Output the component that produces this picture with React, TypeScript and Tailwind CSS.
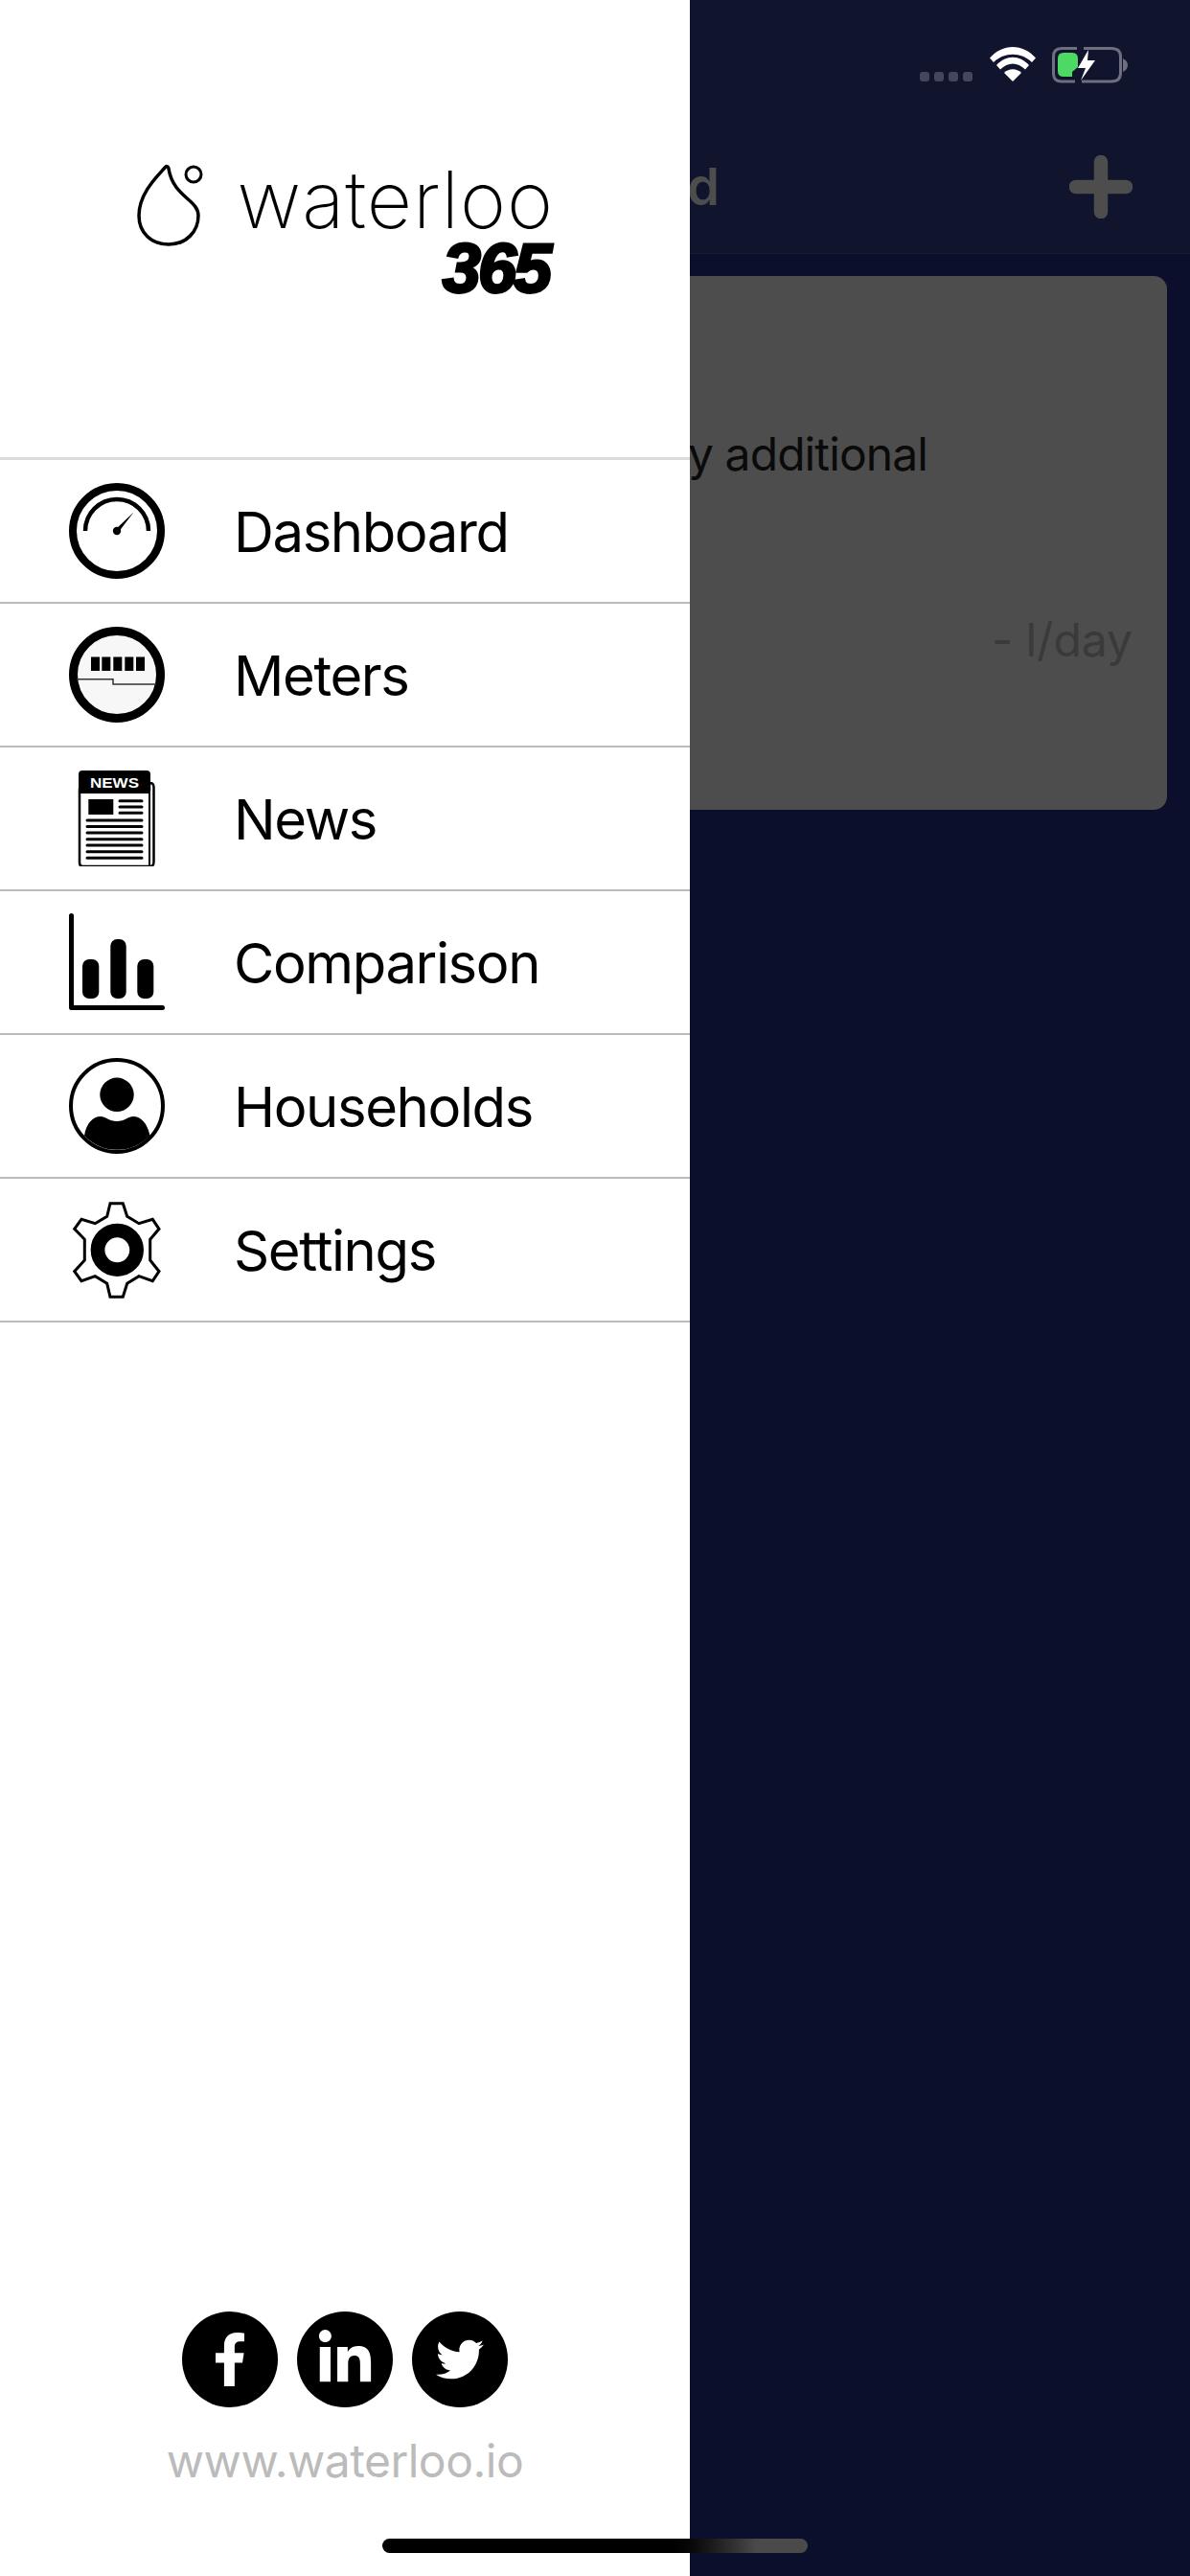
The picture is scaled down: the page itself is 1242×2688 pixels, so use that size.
import React from 'react';
import { FaFacebookF, FaLinkedinIn, FaTwitter } from 'react-icons/fa';

const font = { fontFamily: 'Inter, "Liberation Sans", sans-serif' };

const GaugeIcon = () => (
  <svg viewBox="0 0 100 100" className="w-[100px] h-[100px]">
    <circle cx="50" cy="50" r="46" fill="none" stroke="#000" strokeWidth="8" />
    <path d="M17 50A33 33 0 0 1 83 50" fill="none" stroke="#000" strokeWidth="4.5" />
    <circle cx="50" cy="50" r="4.2" fill="#000" />
    <path d="M48.5 48.5L67.5 30.5L51.5 51.5Z" fill="#000" />
  </svg>
);

const MeterIcon = () => (
  <svg viewBox="0 0 100 100" className="w-[100px] h-[100px]">
    <circle cx="50" cy="50" r="45.5" fill="#f7f7f7" stroke="#000" strokeWidth="9" />
    <rect x="23" y="31.5" width="9" height="14.5" fill="#000" />
    <rect x="34.3" y="31.5" width="9" height="14.5" fill="#000" />
    <rect x="46.3" y="31.5" width="9" height="14.5" fill="#000" />
    <rect x="58.3" y="31.5" width="9" height="14.5" fill="#000" />
    <rect x="70" y="31.5" width="9" height="14.5" fill="#000" />
    <path d="M8 54.7H46V60H91" fill="none" stroke="#333" strokeWidth="1.5" />
  </svg>
);

const NewsIcon = () => (
  <svg viewBox="0 0 100 100" className="w-[100px] h-[100px]">
    <path d="M84 13H85Q88.5 13 88.5 18V95Q88.5 100 85 100H14Q11 100 11 96V20H84Z" fill="#fff" stroke="#000" strokeWidth="2.5" />
    <path d="M84 22V100" stroke="#000" strokeWidth="2" />
    <path d="M10 24V4Q10 0 14 0H81Q85 0 85 4V24Z" fill="#000" />
    <text x="47.5" y="17.5" textAnchor="middle" fontSize="14" fontWeight="700" fill="#fff" textLength="51" lengthAdjust="spacingAndGlyphs" fontFamily="Liberation Sans, sans-serif">NEWS</text>
    <rect x="20.3" y="30" width="26" height="16" fill="#000" />
    <path d="M53 31.7H76M53 38H76M53 44.3H76" stroke="#000" strokeWidth="3" strokeLinecap="round" />
    <path d="M19 52H76M19 58.4H76M19 65H76M19 71.7H76M19 78H76M19 84.7H76M19 91.3H76" stroke="#000" strokeWidth="3" strokeLinecap="round" />
  </svg>
);

const ChartIcon = () => (
  <svg viewBox="0 0 100 102" className="w-[100px] h-[102px]">
    <path d="M2.5 2.5V98.5H97.5" fill="none" stroke="#000" strokeWidth="5" strokeLinecap="round" strokeLinejoin="round" />
    <rect x="14" y="48" width="17.3" height="41" rx="7" fill="#000" />
    <rect x="43.3" y="27" width="16.4" height="62" rx="7" fill="#000" />
    <rect x="71.3" y="48" width="17" height="41" rx="7" fill="#000" />
  </svg>
);

const PersonIcon = () => (
  <svg viewBox="0 0 100 100" className="w-[100px] h-[100px]">
    <circle cx="50" cy="50" r="48" fill="none" stroke="#000" strokeWidth="4" />
    <circle cx="50" cy="38.3" r="17.7" fill="#000" />
    <path d="M16 81C18 68 25 61 33 61C38 61 42 66 50 66C58 66 62 61 67 61C75 61 82 68 84.5 81A47 47 0 0 1 16 81Z" fill="#000" />
  </svg>
);

const GearIcon = () => (
  <svg viewBox="0 0 100 101" className="w-[100px] h-[101px]">
    <polygon
      points="43,1.7 56.3,1.7 60.7,15.3 73,22.7 87.3,18.3 94,28.3 84.7,39.3 84.7,61 94,72.7 87.3,82.7 73,77.7 60.7,85.3 56.3,99.3 43,99.3 39.7,85.3 27.3,77.7 13,82.7 5.7,72.7 16.3,61 16.3,39.3 5.7,28.3 13,18.3 27.3,22.7 39.7,15.3"
      fill="none"
      stroke="#000"
      strokeWidth="3"
    />
    <circle cx="50.3" cy="50.3" r="20.3" fill="none" stroke="#000" strokeWidth="14.7" />
  </svg>
);

const menuItems = [
  { label: 'Dashboard', icon: <GaugeIcon /> },
  { label: 'Meters', icon: <MeterIcon /> },
  { label: 'News', icon: <NewsIcon /> },
  { label: 'Comparison', icon: <ChartIcon /> },
  { label: 'Households', icon: <PersonIcon /> },
  { label: 'Settings', icon: <GearIcon /> },
];

const StatusIcons = () => (
  <svg viewBox="0 0 230 50" className="w-[230px] h-[50px]">
    {/* cell dots */}
    <rect x="13" y="28" width="10" height="10" rx="3" fill="#44475c" />
    <rect x="28" y="28" width="10" height="10" rx="3" fill="#44475c" />
    <rect x="43" y="28" width="10" height="10" rx="3" fill="#44475c" />
    <rect x="58" y="28" width="10" height="10" rx="3" fill="#44475c" />
    {/* wifi */}
    <path d="M86 13.5C99 -2 121 -2 134 13.5L130 18C119 7 101 7 90 18Z" fill="#fff" />
    <path d="M93 21C103 10 117 10 127 21L123 25.5C115 17.5 105 17.5 97 25.5Z" fill="#fff" />
    <path d="M101 29C106 24 114 24 119 29L110 38Z" fill="#fff" />
    {/* battery */}
    <path d="M177 3.5H161Q152.5 3.5 152.5 12V30Q152.5 38 161 38H175M182 38H213Q222.5 38 222.5 29V12Q222.5 3.5 213 3.5H184" fill="none" stroke="#6d6e7e" strokeWidth="3" />
    <path d="M225 14Q230 16.5 230 21Q230 25.5 225 28Z" fill="#6d6e7e" />
    <path d="M163 8H172Q178 8 178 14V23L172 28V33H163Q157 33 157 27V14Q157 8 163 8Z" fill="#4cd964" />
    <path d="M189 5L178 24H186L181 37L196 16H188Z" fill="#fff" />
  </svg>
);

const App: React.FC = () => {
  return (
    <div className="relative flex w-[1242px] h-[2688px] overflow-hidden bg-[#0b0f2c]" style={font}>
      {/* drawer */}
      <div className="relative z-10 flex flex-col w-[720px] shrink-0 bg-white">
        <div className="flex h-[480px] pl-[140px] pt-[170px] border-b-[3px] border-[#dcdcdc]">
          <svg viewBox="0 0 75 90" className="w-[75px] h-[90px]">
            <path d="M32 5C24 14 5 32 5 55C5 73 18 85 36 85C54 85 67 72 67 55C67 38 41 36 36 6C35.5 3 33.5 3 32 5Z" fill="none" stroke="#000" strokeWidth="3.5" />
            <circle cx="62" cy="12" r="8" fill="none" stroke="#000" strokeWidth="3" />
          </svg>
          <div className="flex flex-col items-end ml-[33px] w-[330px]">
            <span className="text-[82px] leading-[78px] font-extralight text-black tracking-[1px] whitespace-nowrap">waterloo</span>
            <span className="mr-[5px] text-[72px] leading-[64px] font-bold italic font-['Liberation_Sans'] text-black tracking-[-3px] [-webkit-text-stroke:3px_black]">365</span>
          </div>
        </div>
        {menuItems.map(item => (
          <div key={item.label} className="flex items-center h-[150px] border-b-2 border-[#bcbcbc]">
            <div className="flex justify-center w-[100px] ml-[72px]">{item.icon}</div>
            <span className="ml-[72px] pt-[2px] text-[58px] leading-none text-black tracking-[-1.4px]">{item.label}</span>
          </div>
        ))}
        <div className="mt-auto flex flex-col items-center pb-[90px]">
          <div className="flex gap-5">
            <div className="flex items-center justify-center w-[100px] h-[100px] rounded-full bg-black">
              <FaFacebookF className="text-white w-[56px] h-[56px]" />
            </div>
            <div className="flex items-center justify-center w-[100px] h-[100px] rounded-full bg-black">
              <FaLinkedinIn className="text-white w-[62px] h-[62px]" />
            </div>
            <div className="flex items-center justify-center w-[100px] h-[100px] rounded-full bg-black">
              <FaTwitter className="text-white w-[50px] h-[50px]" />
            </div>
          </div>
          <span className="mt-[26px] text-[48px] leading-[60px] text-[#bbbbbb] tracking-[-0.5px]">www.waterloo.io</span>
        </div>
      </div>

      {/* page behind the drawer */}
      <div className="flex flex-col flex-1 min-w-0">
        <div className="flex flex-col h-[265px] bg-[#10142d] border-b border-[#171b33]">
          <div className="flex justify-end pr-[65px] pt-[47px]">
            <StatusIcons />
          </div>
          <div className="flex items-center justify-between mt-[65px] pr-[60px]">
            <div className="flex justify-end w-[31px] overflow-hidden">
              <span className="text-[54px] leading-[60px] font-semibold text-[#4d4d4d] whitespace-nowrap">Dashboard</span>
            </div>
            <svg viewBox="0 0 66 66" className="w-[66px] h-[66px]">
              <path d="M33 7V59M7 33H59" stroke="#4d4d4d" strokeWidth="14.5" strokeLinecap="round" />
            </svg>
          </div>
        </div>
        <div className="flex flex-col h-[557px] mt-[23px] mr-[24px] bg-[#4d4d4d] rounded-r-[14px] pt-[156px]">
          <div className="flex justify-end w-[248px] overflow-hidden">
            <span className="text-[48px] leading-[60px] text-[#0a0a0a] tracking-[-0.9px] whitespace-nowrap">Any additional</span>
          </div>
          <div className="flex justify-end mt-[134px] pr-[36px]">
            <span className="text-[48px] leading-[60px] text-[#3a3a3a]">- l/day</span>
          </div>
        </div>
      </div>

      {/* home indicator */}
      <div className="absolute z-20 left-[399px] top-[2649px] w-[444px] h-[15px] rounded-full bg-gradient-to-r from-black from-[65%] to-[#4a4a4a] to-[88%]" />
    </div>
  );
};

export default App;
